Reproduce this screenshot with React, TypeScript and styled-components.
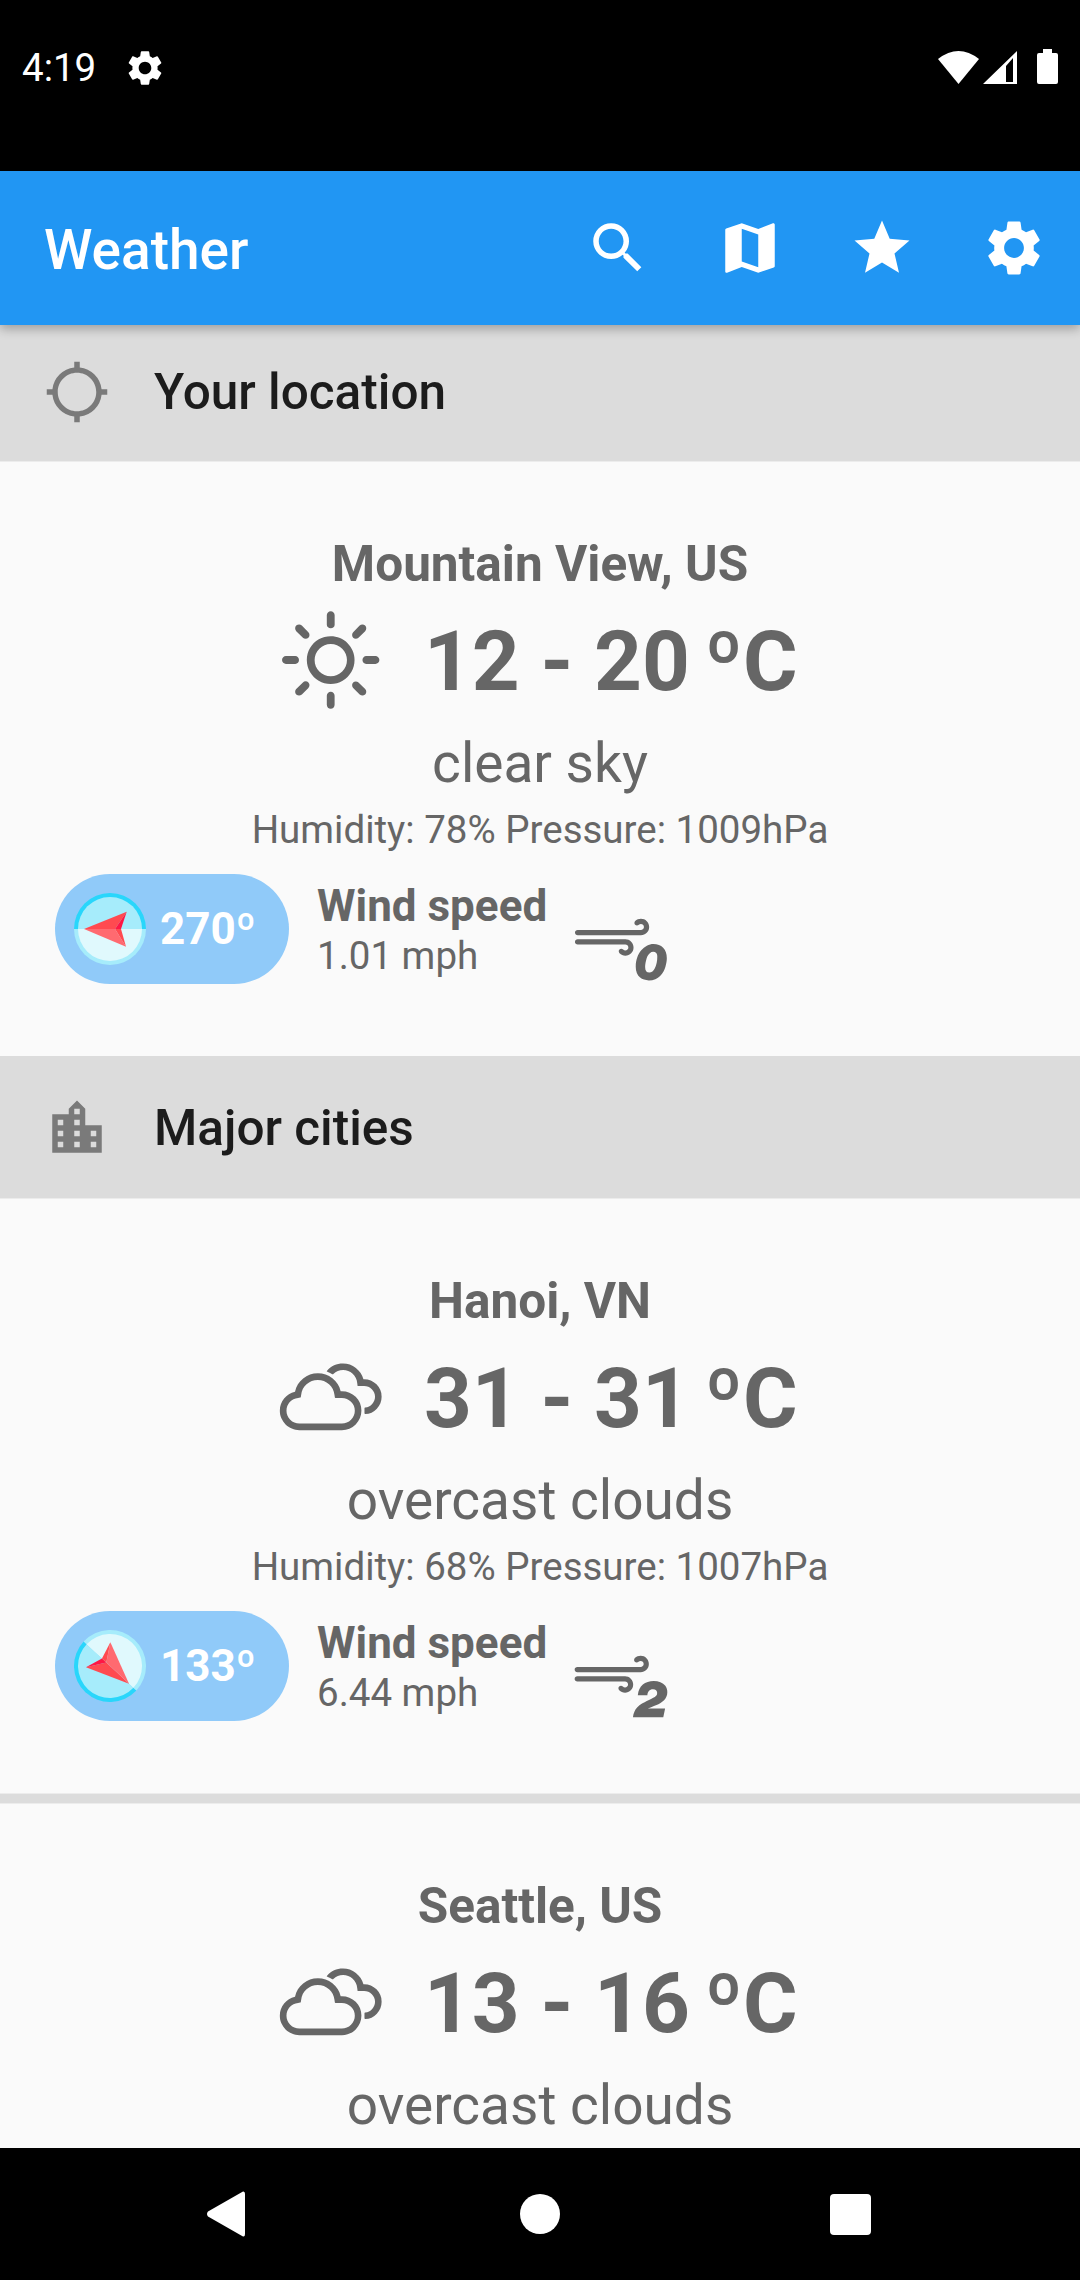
import React from 'react';
import styled, { createGlobalStyle } from 'styled-components';
import { MdGpsNotFixed, MdLocationCity, MdMap, MdSearch, MdSettings, MdStar } from 'react-icons/md';
import { WiCloudy, WiDaySunny, WiWindBeaufort0, WiWindBeaufort2 } from 'react-icons/wi';

const GlobalStyle = createGlobalStyle`
  html, body {
    margin: 0;
    padding: 0;
    background: #000;
  }
  body {
    font-family: Roboto, "Liberation Sans", sans-serif;
  }
`;

const Screen = styled.div`
  width: 1080px;
  height: 2280px;
  display: flex;
  flex-direction: column;
  overflow: hidden;
  background: #fafafa;
`;

const StatusBar = styled.div`
  height: 171px;
  flex-shrink: 0;
  background: #000;
  color: #fff;
  box-sizing: border-box;
  padding: 47px 20px 0 22px;
  display: flex;
  align-items: flex-start;
  justify-content: space-between;
`;

const StatusGroup = styled.div`
  height: 42px;
  display: flex;
  align-items: center;
`;

const Clock = styled.span`
  font-size: 38.5px;
  line-height: 42px;
  margin-right: 28px;
`;

const AppBar = styled.header`
  height: 154px;
  flex-shrink: 0;
  background: #2196f3;
  color: #fff;
  padding-left: 44px;
  display: flex;
  align-items: center;
  justify-content: space-between;
  box-shadow: 0 4px 10px rgba(0, 0, 0, 0.28);
  position: relative;
  z-index: 1;
`;

const AppTitle = styled.h1`
  margin: 4px 0 0;
  font-size: 55px;
  font-weight: 500;
`;

const Actions = styled.div`
  display: flex;
`;

const ActionButton = styled.div`
  width: 132px;
  height: 132px;
  display: flex;
  align-items: center;
  justify-content: center;
`;

const List = styled.main`
  flex: 1;
  min-height: 0;
  overflow: hidden;
`;

const SectionHeader = styled.div<{ $height: number; $top?: number; $bottom?: number }>`
  height: ${(p) => p.$height}px;
  box-sizing: border-box;
  padding: ${(p) => p.$top ?? 0}px 0 ${(p) => p.$bottom ?? 0}px 44px;
  background: #dcdcdc;
  border-bottom: 1px solid #ececec;
  display: flex;
  align-items: center;
  gap: 44px;
  color: #7a7a7a;
`;

const SectionTitle = styled.h2`
  margin: 0;
  font-size: 49.5px;
  font-weight: 500;
  color: #1c1c1c;
`;

const Card = styled.article`
  height: 594px;
  box-sizing: border-box;
  padding-top: 75px;
  color: #666;
  display: flex;
  flex-direction: column;
  align-items: center;
`;

const Divider = styled.div`
  height: 11px;
  box-sizing: border-box;
  background: #dcdcdc;
  border-top: 1px solid #ececec;
  border-bottom: 1px solid #ececec;
`;

const City = styled.div`
  font-size: 49.5px;
  line-height: 54px;
  font-weight: 700;
`;

const TempRow = styled.div`
  height: 142px;
  margin-right: 20px;
  display: flex;
  align-items: center;
  justify-content: center;
  gap: 24px;
`;

const WeatherGlyph = styled.div`
  width: 137.5px;
  height: 137.5px;
  display: flex;
`;

const Temp = styled.div`
  margin-bottom: 2px;
  font-size: 83.5px;
  font-weight: 700;
`;

const DegreeMark = styled.span<{ $pull?: number }>`
  font-weight: 900;
  margin-left: ${(p) => p.$pull ?? 0}px;
`;

const Description = styled.div`
  font-size: 55px;
  line-height: 60px;
`;

const Details = styled.div`
  margin-top: 15px;
  font-size: 38.5px;
  line-height: 44px;
`;

const WindRow = styled.div`
  height: 110px;
  margin-top: 22px;
  align-self: stretch;
  padding-left: 55px;
  display: flex;
  align-items: center;
`;

const DirectionPill = styled.div`
  width: 234px;
  height: 110px;
  box-sizing: border-box;
  padding-left: 19px;
  border-radius: 55px;
  background: #90caf9;
  color: #fff;
  display: flex;
  align-items: center;
  gap: 14px;
  font-size: 44px;
  font-weight: 700;
`;

const WindText = styled.div`
  margin-left: 28px;
  padding-top: 3px;
  width: 235px;
`;

const WindLabel = styled.div`
  font-size: 44px;
  line-height: 48px;
  font-weight: 700;
`;

const WindValue = styled.div`
  margin-top: 3px;
  font-size: 38.5px;
  line-height: 46px;
`;

const BeaufortBox = styled.div`
  width: 137.5px;
  height: 137.5px;
  margin-top: 40px;
  display: flex;
`;

const NavBar = styled.nav`
  height: 132px;
  flex-shrink: 0;
  background: #000;
  padding-left: 206px;
  display: flex;
  align-items: center;
`;

const NavKey = styled.div<{ $after: number }>`
  margin-right: ${(p) => p.$after}px;
  display: flex;
`;

const Compass = ({ deg }: { deg: number }) => (
  <svg width="72" height="72" viewBox="-36 -36 72 72">
    <g transform={`rotate(${deg})`}>
      <path d="M0-36A36 36 0 0 1 0 36Z" fill="#29d6fb" />
      <path d="M0-36A36 36 0 0 0 0 36Z" fill="#a6ecfb" />
      <path d="M0-32A32 32 0 0 1 0 32Z" fill="#a6ecfb" />
      <path d="M0-32A32 32 0 0 0 0 32Z" fill="#e0f9fd" />
      <path d="M0-26L17.3 16.7L0 5Z" fill="#ff4a50" />
      <path d="M0-26L-17.7 16L0 5Z" fill="#ff6a70" />
      <path d="M17.3 16.7L0 5L0 11Z" fill="#ff1744" />
      <path d="M-17.7 16L0 5L0 11Z" fill="#ff4a50" />
    </g>
  </svg>
);

interface Report {
  city: string;
  range: string;
  description: string;
  icon: React.ReactNode;
}

interface WindReport extends Report {
  details: string;
  deg: number;
  speed: string;
  beaufort: React.ReactNode;
}

const mountainView: WindReport = {
  city: 'Mountain View, US',
  range: '12 - 20',
  description: 'clear sky',
  icon: <WiDaySunny size={137.5} />,
  details: 'Humidity: 78% Pressure: 1009hPa',
  deg: 270,
  speed: '1.01 mph',
  beaufort: <WiWindBeaufort0 size={137.5} />,
};

const hanoi: WindReport = {
  city: 'Hanoi, VN',
  range: '31 - 31',
  description: 'overcast clouds',
  icon: <WiCloudy size={137.5} />,
  details: 'Humidity: 68% Pressure: 1007hPa',
  deg: 133,
  speed: '6.44 mph',
  beaufort: <WiWindBeaufort2 size={137.5} />,
};

// the last card runs under the nav bar, only its top part is on screen
const seattle: Report = {
  city: 'Seattle, US',
  range: '13 - 16',
  description: 'overcast clouds',
  icon: <WiCloudy size={137.5} />,
};

const ReportHead = ({ report }: { report: Report }) => (
  <>
    <City>{report.city}</City>
    <TempRow>
      <WeatherGlyph>{report.icon}</WeatherGlyph>
      <Temp>
        {report.range} <DegreeMark $pull={-6}>º</DegreeMark>C
      </Temp>
    </TempRow>
    <Description>{report.description}</Description>
  </>
);

const ReportCard = ({ report }: { report: WindReport }) => (
  <Card>
    <ReportHead report={report} />
    <Details>{report.details}</Details>
    <WindRow>
      <DirectionPill>
        <Compass deg={report.deg} />
        <span>
          {report.deg}
          <DegreeMark>º</DegreeMark>
        </span>
      </DirectionPill>
      <WindText>
        <WindLabel>Wind speed</WindLabel>
        <WindValue>{report.speed}</WindValue>
      </WindText>
      <BeaufortBox>{report.beaufort}</BeaufortBox>
    </WindRow>
  </Card>
);

export default function App() {
  return (
    <Screen>
      <GlobalStyle />
      <StatusBar>
        <StatusGroup>
          <Clock>4:19</Clock>
          <MdSettings size={42} />
        </StatusGroup>
        <StatusGroup>
          <svg width="122" height="38" viewBox="0 1 122 38" fill="#fff">
            <path d="M0 11Q20.5-5 41 11L20.5 36Z" />
            <path d="M79 3V36H45ZM68 18L75 10V34H68Z" fillRule="evenodd" />
            <path d="M105 1H114V5H118Q120 5 120 7V34Q120 36 118 36H101Q99 36 99 34V7Q99 5 101 5H105Z" />
          </svg>
        </StatusGroup>
      </StatusBar>
      <AppBar>
        <AppTitle>Weather</AppTitle>
        <Actions>
          <ActionButton><MdSearch size={66} /></ActionButton>
          <ActionButton><MdMap size={66} /></ActionButton>
          <ActionButton><MdStar size={66} /></ActionButton>
          <ActionButton><MdSettings size={66} /></ActionButton>
        </Actions>
      </AppBar>
      <List>
        <SectionHeader $height={137} $bottom={3}>
          <MdGpsNotFixed size={66} />
          <SectionTitle>Your location</SectionTitle>
        </SectionHeader>
        <ReportCard report={mountainView} />
        <SectionHeader $height={143} $top={2}>
          <MdLocationCity size={66} />
          <SectionTitle>Major cities</SectionTitle>
        </SectionHeader>
        <ReportCard report={hanoi} />
        <Divider />
        <Card>
          <ReportHead report={seattle} />
        </Card>
      </List>
      <NavBar>
        <NavKey $after={274}>
          <svg width="40" height="46" viewBox="0 0 40 46" fill="#fff">
            <path d="M37 0.5Q39 0 39 3V43Q39 46 37 45.5L2 25.5Q0 23 2 20.5Z" />
          </svg>
        </NavKey>
        <NavKey $after={270}>
          <svg width="40" height="40" viewBox="0 0 40 40" fill="#fff">
            <circle cx="20" cy="20" r="20" />
          </svg>
        </NavKey>
        <NavKey $after={0}>
          <svg width="41" height="41" viewBox="0 0 41 41" fill="#fff">
            <rect width="41" height="41" rx="4" />
          </svg>
        </NavKey>
      </NavBar>
    </Screen>
  );
}
